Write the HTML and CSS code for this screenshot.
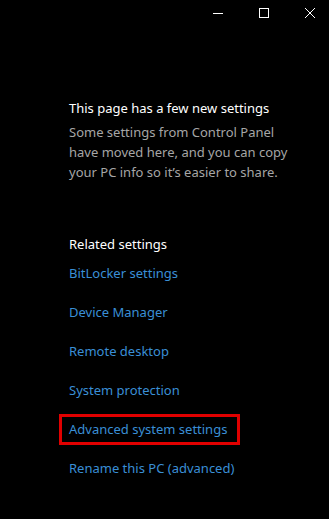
FILE: index.html
```html
<!DOCTYPE html>
<html>
<head>
<meta charset="utf-8">
<link rel="stylesheet" href="styles.css">
</head>
<body>
<div class="window">
  <div class="titlebar">
    <span class="tb-btn">
      <svg width="10" height="10" viewBox="0 0 10 10"><path d="M0 5.5H10" stroke="#fff" stroke-width="1"/></svg>
    </span>
    <span class="tb-btn">
      <svg width="10" height="10" viewBox="0 0 10 10"><rect x="0.5" y="0.5" width="9" height="9" fill="none" stroke="#fff" stroke-width="1"/></svg>
    </span>
    <span class="tb-btn">
      <svg width="10" height="10" viewBox="0 0 10 10"><path d="M0 0L10 10M10 0L0 10" stroke="#fff" stroke-width="1"/></svg>
    </span>
  </div>
  <div class="content">
    <div class="notice">
      <h2 class="heading">This page has a few new settings</h2>
      <p class="desc">Some settings from Control Panel have moved here, and you can copy your PC info so it’s easier to share.</p>
    </div>
    <div class="related">
      <h2 class="heading">Related settings</h2>
      <ul class="links">
        <li><a class="link">BitLocker settings</a></li>
        <li><a class="link">Device Manager</a></li>
        <li><a class="link">Remote desktop</a></li>
        <li><a class="link">System protection</a></li>
        <li><a class="link highlighted">Advanced system settings</a></li>
        <li><a class="link">Rename this PC (advanced)</a></li>
      </ul>
    </div>
  </div>
</div>
</body>
</html>
```
FILE: styles.css
```css
html, body {
  margin: 0;
  padding: 0;
  background: #000;
}
.window {
  width: 329px;
  height: 519px;
  overflow: hidden;
  background: #000;
  font-family: "Noto Sans", "Open Sans", sans-serif;
  color: #fff;
}
.titlebar {
  display: flex;
  justify-content: flex-end;
  height: 25px;
  margin-right: -4px;
}
.tb-btn {
  width: 46px;
  height: 25px;
  display: flex;
  align-items: center;
  justify-content: center;
}
.content {
  padding: 73px 0 0 69px;
}
.heading {
  margin: 0;
  font-size: 13px;
  font-weight: normal;
  line-height: 20px;
  color: #fff;
}
.desc {
  margin: 4px 0 0;
  width: 230px;
  font-size: 13px;
  line-height: 20px;
  color: #a6a6a6;
}
.related {
  margin-top: 52px;
}
.links {
  list-style: none;
  margin: 8px 0 0;
  padding: 0;
  display: flex;
  flex-direction: column;
  gap: 19px;
}
.links li {
  height: 20px;
  line-height: 20px;
}
.link {
  font-size: 13px;
  color: #3a8fd6;
}
.highlighted {
  display: inline-block;
  margin: -5px 0 0 -10px;
  padding: 2px 10px 3px 7px;
  border: 3px solid #e00000;
}
```
